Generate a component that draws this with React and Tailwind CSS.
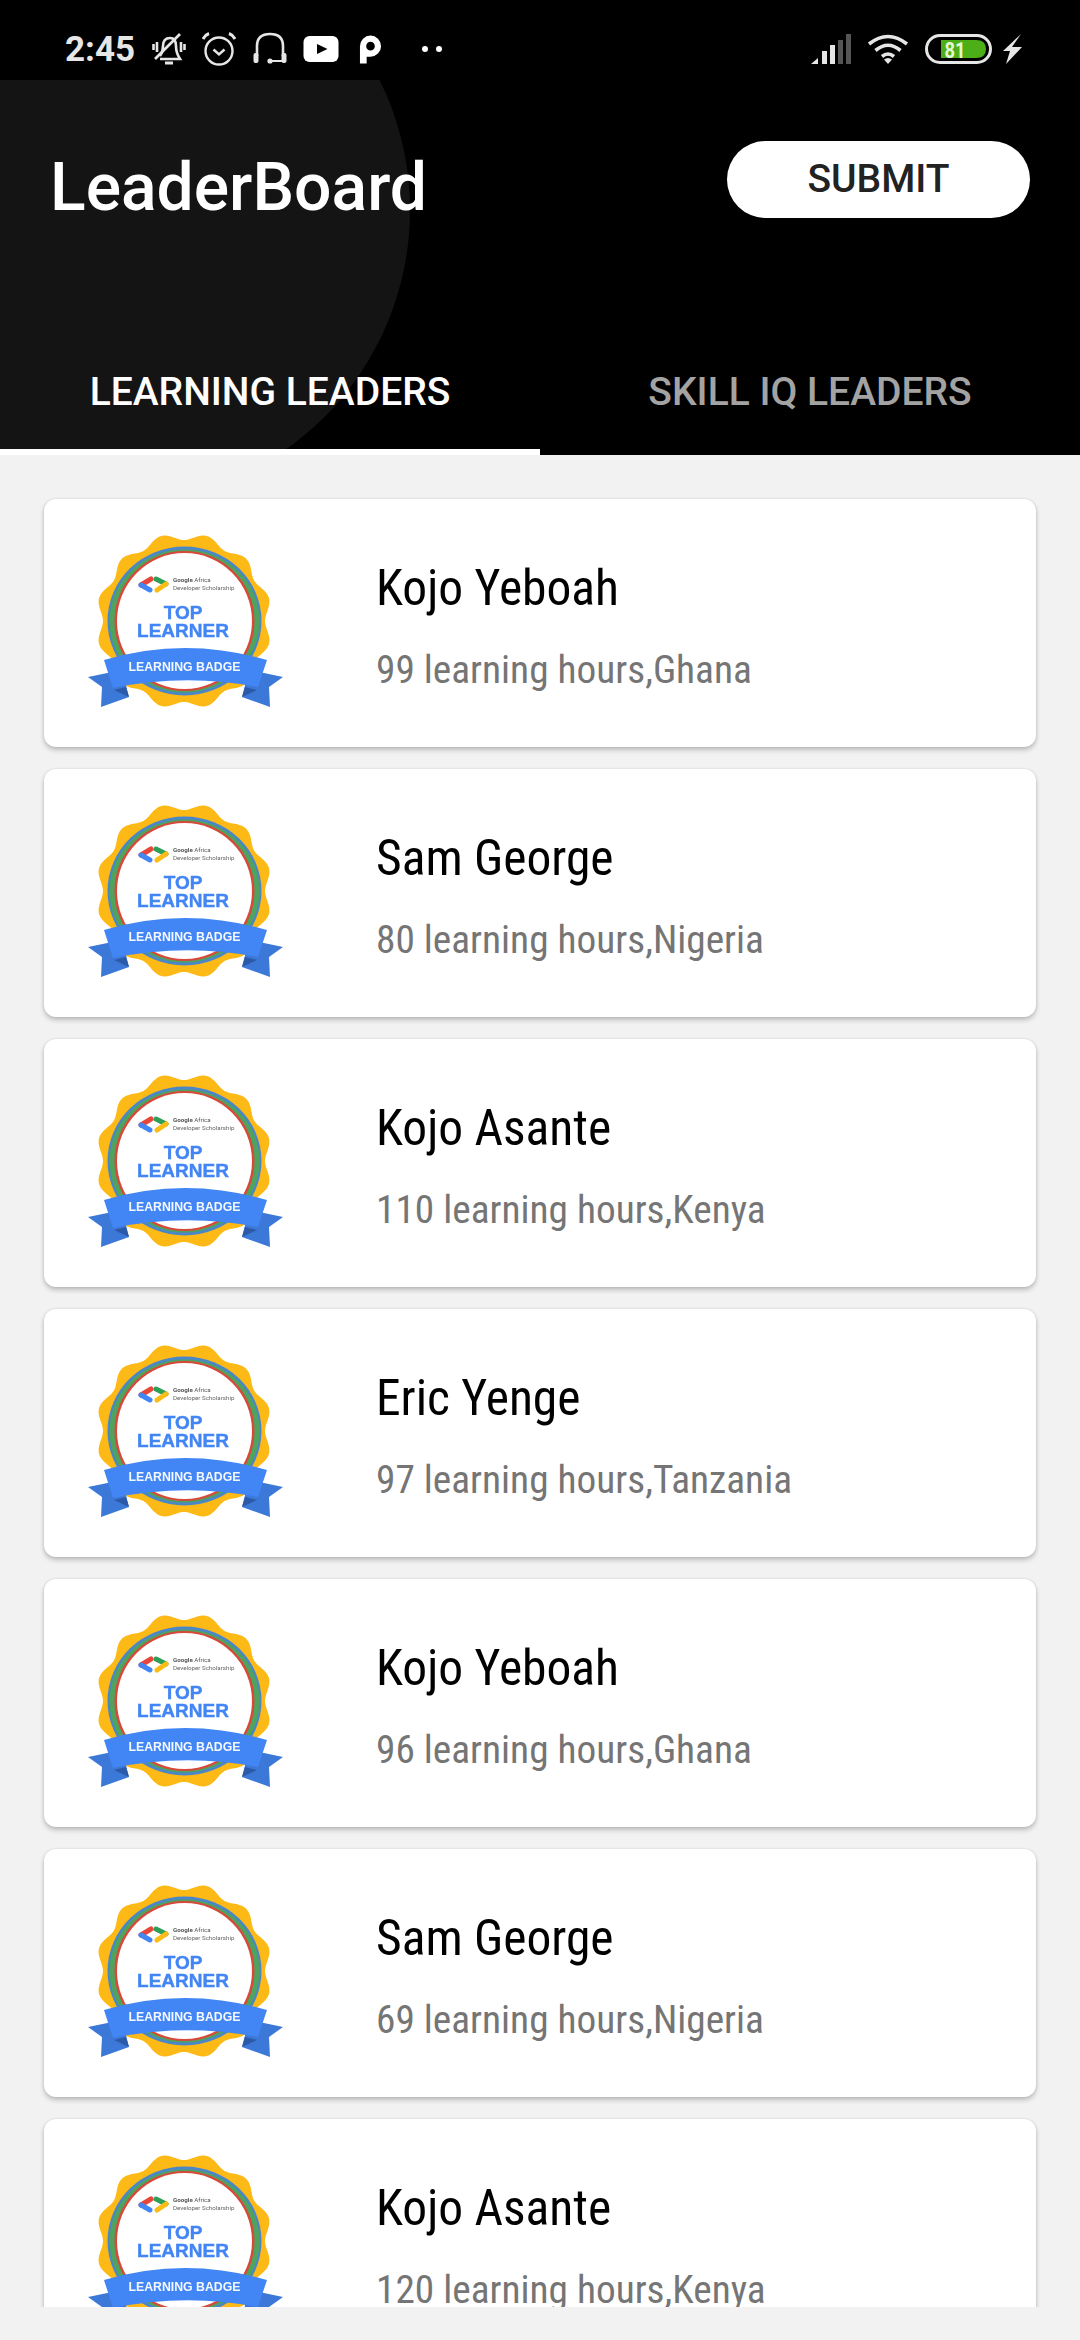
import React from 'react';

const leaders = [
  { name: 'Kojo Yeboah', hours: 99, country: 'Ghana' },
  { name: 'Sam George', hours: 80, country: 'Nigeria' },
  { name: 'Kojo Asante', hours: 110, country: 'Kenya' },
  { name: 'Eric Yenge', hours: 97, country: 'Tanzania' },
  { name: 'Kojo Yeboah', hours: 96, country: 'Ghana' },
  { name: 'Sam George', hours: 69, country: 'Nigeria' },
  { name: 'Kojo Asante', hours: 120, country: 'Kenya' },
];

// Scalloped edge of the badge
const scallop = (() => {
  const pts = [];
  for (let i = 0; i < 360; i++) {
    const t = (i * Math.PI) / 180;
    const r = 84.5 - 3.5 * Math.cos(12 * t);
    const x = 184 + r * Math.sin(t);
    const y = 621 - r * Math.cos(t);
    pts.push(`${x.toFixed(1)} ${y.toFixed(1)}`);
  }
  return `M${pts.join('L')}Z`;
})();

const Badge = () => (
  <svg viewBox="80 528 210 190" className="w-[210px] h-[190px] shrink-0 blur-[0.5px]">
    <path d={scallop} fill="#fdb916" />
    <ellipse cx="184.5" cy="621" rx="77" ry="74.5" fill="#4a86c8" />
    <ellipse cx="184.5" cy="621" rx="75" ry="71.5" fill="#4fa35c" />
    <ellipse cx="184.5" cy="621" rx="70" ry="70" fill="#d8483b" />
    <ellipse cx="184.5" cy="621" rx="67.5" ry="68" fill="#ffffff" />
    {/* code brackets logo */}
    <path d="M151 579 L141 585" stroke="#e5483a" strokeWidth="5" strokeLinecap="round" />
    <path d="M141 585 L150 590" stroke="#4285f4" strokeWidth="5" strokeLinecap="round" />
    <path d="M156 579 L166 584" stroke="#2f9e58" strokeWidth="5" strokeLinecap="round" />
    <path d="M166 584 L157 590" stroke="#fbbc15" strokeWidth="5" strokeLinecap="round" />
    <text x="173" y="582" fontSize="6.2" fontWeight="700" fill="#555" fontFamily="Roboto, sans-serif">
      Google <tspan fontWeight="400">Africa</tspan>
    </text>
    <text x="173" y="590" fontSize="6.2" fill="#666" fontFamily="Roboto, sans-serif">Developer Scholarship</text>
    <text x="183" y="619" fontSize="19" fontWeight="700" fill="#4285f4" stroke="#4285f4" strokeWidth="0.4" textAnchor="middle" fontFamily="'Liberation Sans', sans-serif">TOP</text>
    <text x="183" y="637" fontSize="19" fontWeight="700" fill="#4285f4" stroke="#4285f4" strokeWidth="0.4" textAnchor="middle" fontFamily="'Liberation Sans', sans-serif">LEARNER</text>
    {/* ribbon */}
    <path d="M88 677 L102 687 L101 707 L129 697 L122 670 Z" fill="#3c78d8" />
    <path d="M283 677 L269 687 L270 707 L242 697 L249 670 Z" fill="#3c78d8" />
    <path d="M114 690 L129 697 L126 687 Z" fill="#2c5aa8" />
    <path d="M257 690 L242 697 L245 687 Z" fill="#2c5aa8" />
    <path d="M104 660 Q185 636 267 660 L258 687 Q185 673 113 688 Z" fill="#4285f4" />
    <text x="184.5" y="671" fontSize="12.3" fontWeight="700" fill="#f4f8ff" textAnchor="middle" fontFamily="'Liberation Sans', sans-serif">LEARNING BADGE</text>
  </svg>
);

const StatusBar = () => (
  <div className="relative z-10 h-[80px] bg-black pt-[32px] pl-[65px] pr-[58px] flex justify-between">
    <div className="flex items-center h-[34px]">
      <span className="font-['Roboto'] font-bold text-[35px] leading-none text-[#e6e6e6]">2:45</span>
      {/* silent bell */}
      <svg viewBox="0 0 34 34" className="w-[34px] h-[34px] ml-[17px]" fill="none" stroke="#e6e6e6" strokeWidth="2.6">
        <path d="M8 24 Q11 20 11 14 Q11 6 18 6 Q24 6 24 14 Q24 21 28 27 L8 27" />
        <path d="M3 27 L28 2" />
        <path d="M1.5 12 V18 M5 10 V20 M29 10 V20 M32.5 12 V18" />
        <path d="M13 31 H21" strokeWidth="3" />
      </svg>
      {/* alarm */}
      <svg viewBox="0 0 34 34" className="w-[34px] h-[34px] ml-[16px]" fill="none" stroke="#e6e6e6" strokeWidth="2.4">
        <circle cx="17" cy="19" r="13.5" />
        <path d="M11.5 17.5 L17 22.5 L22.5 17.5" />
        <path d="M1 7 Q3 3 7 1.5 M33 7 Q31 3 27 1.5" strokeWidth="3" />
      </svg>
      {/* headset */}
      <svg viewBox="0 0 34 34" className="w-[34px] h-[34px] ml-[17px]" fill="none" stroke="#e6e6e6" strokeWidth="2.6">
        <path d="M4 24 V14 Q4 2 17 2 Q30 2 30 14 V24" />
        <rect x="0.5" y="21" width="5" height="10" rx="2" fill="#e6e6e6" stroke="none" />
        <rect x="28.5" y="21" width="5" height="10" rx="2" fill="#e6e6e6" stroke="none" />
        <circle cx="17" cy="29" r="2.6" fill="#e6e6e6" stroke="none" />
        <path d="M17 29 H29" strokeWidth="2" />
      </svg>
      {/* youtube */}
      <svg viewBox="0 0 36 28" className="w-[36px] h-[28px] ml-[16px]">
        <rect x="0.5" y="1" width="35" height="26" rx="6" fill="#ffffff" />
        <path d="M14 9 L24.5 14 L14 19 Z" fill="#000" />
      </svg>
      {/* p app */}
      <svg viewBox="0 0 24 30" className="w-[23px] h-[30px] ml-[20px]">
        <path d="M1 30 V12 A11 11 0 1 1 12 23 H8 V30 Z M12 7.5 A4.5 4.5 0 1 0 12 16.5 A4.5 4.5 0 1 0 12 7.5 Z" fill="#ffffff" fillRule="evenodd" />
      </svg>
      <span className="w-[6px] h-[6px] rounded-full bg-white ml-[40px]" />
      <span className="w-[6px] h-[6px] rounded-full bg-white ml-[8px]" />
    </div>
    <div className="flex items-center h-[34px]">
      {/* signal */}
      <svg viewBox="0 0 40 30" className="w-[40px] h-[30px]">
        <path d="M0 30 L7 24 V30 Z" fill="#e6e6e6" />
        <rect x="11" y="17" width="5" height="13" fill="#e6e6e6" />
        <rect x="19" y="11" width="5" height="19" fill="#e6e6e6" />
        <rect x="27" y="6" width="5" height="24" fill="#555" />
        <rect x="35" y="0" width="5" height="30" fill="#555" />
      </svg>
      {/* wifi */}
      <svg viewBox="0 0 42 30" className="w-[42px] h-[30px] ml-[16px]" fill="none" stroke="#e6e6e6" strokeWidth="3.6">
        <path d="M2 10 Q21 -5 40 10" />
        <path d="M8.5 16.5 Q21 6 33.5 16.5" />
        <path d="M15 22.5 Q21 17.5 27 22.5" />
        <path d="M21 30 L17 25.5 Q21 22.5 25 25.5 Z" fill="#e6e6e6" stroke="none" />
      </svg>
      {/* battery */}
      <svg viewBox="0 0 67 30" className="w-[67px] h-[30px] ml-[16px]">
        <rect x="1.5" y="1.5" width="64" height="27" rx="13.5" fill="none" stroke="#e6e6e6" strokeWidth="3" />
        <path d="M16 6 H51 Q61 6 61 15 Q61 24 51 24 H16 Z" fill="#4caf17" />
        <text x="30" y="24" fontSize="22" fontWeight="700" fill="#e4f7d4" textAnchor="middle" fontFamily="Roboto, sans-serif" textLength="21" lengthAdjust="spacingAndGlyphs">81</text>
      </svg>
      {/* charging bolt */}
      <svg viewBox="0 0 19 30" className="w-[19px] h-[30px] ml-[11px]">
        <path d="M18 0 L9 13 H19 L3 30 L7 17 H0 Z" fill="#e6e6e6" />
      </svg>
    </div>
  </div>
);

const LeaderCard = ({ name, hours, country }) => (
  <div className="shrink-0 h-[248px] bg-white rounded-[12px] shadow-[0_3px_5px_rgba(0,0,0,0.22),0_0_3px_rgba(0,0,0,0.1)] flex items-center pl-[36px]">
    <Badge />
    <div className="ml-[86px] pt-[4px] font-['Roboto_Condensed','Roboto',sans-serif] [font-stretch:condensed]">
      <div className="text-[49.5px] leading-[60px] text-black">{name}</div>
      <div className="mt-[29px] text-[39.3px] leading-[46px] text-[#757575]">
        {hours} learning hours,{country}
      </div>
    </div>
  </div>
);

const App = () => {
  return (
    <div className="w-[1080px] h-[2340px] bg-[#f2f2f2] overflow-hidden font-['Roboto',sans-serif]">
      {/* Header */}
      <div className="relative h-[455px] bg-black overflow-hidden flex flex-col">
        <div className="absolute left-[-176px] top-[-83px] w-[586px] h-[586px] rounded-full bg-[#141414]" />
        <StatusBar />
        <div className="relative flex justify-between items-start pl-[50px] pr-[50px] pt-[61px]">
          <h1 className="mt-[8px] text-[66px] leading-[78px] font-medium text-white">LeaderBoard</h1>
          <button className="w-[303px] h-[77px] rounded-full bg-white text-[#222222] text-[39px] font-medium">SUBMIT</button>
        </div>
        <div className="relative mt-auto flex h-[120px]">
          <div className="w-[540px] border-b-[6px] border-white flex items-center justify-center text-white text-[39px] font-medium">
            LEARNING LEADERS
          </div>
          <div className="w-[540px] flex items-center justify-center text-[#a3a3a3] text-[39px] font-medium pb-[6px]">
            SKILL IQ LEADERS
          </div>
        </div>
      </div>

      {/* List */}
      <main className="h-[1852px] overflow-hidden px-[44px] pt-[44px] flex flex-col gap-[22px]">
        {leaders.map((l, i) => (
          <LeaderCard key={i} {...l} />
        ))}
      </main>
    </div>
  );
};

export default App;
